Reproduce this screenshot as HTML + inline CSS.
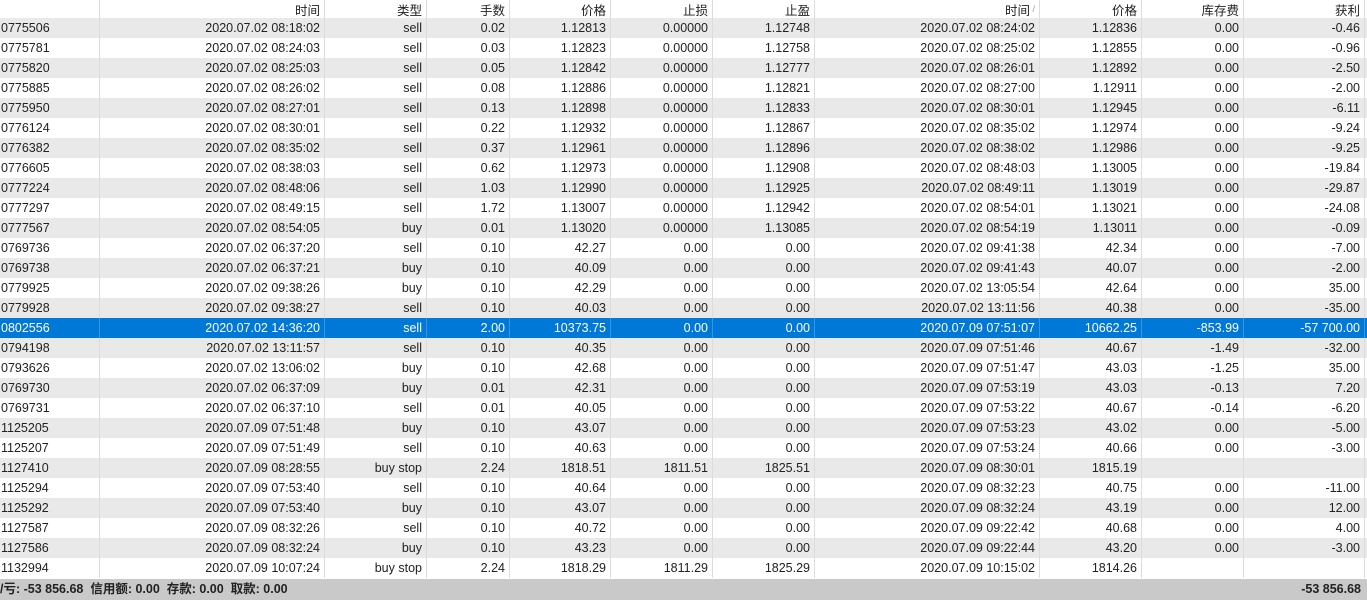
<!DOCTYPE html>
<html><head><meta charset="utf-8"><style>
*{margin:0;padding:0;box-sizing:border-box}
body{width:1367px;height:600px;overflow:hidden;background:#fff;font-family:"Liberation Sans","Noto Sans CJK SC",sans-serif;font-size:12.5px;color:#222}
.r{position:absolute;left:0;width:1367px;display:flex;height:20px}
.r div{height:100%;text-align:right;padding-right:4px;border-right:1px solid #dcdcdc;white-space:nowrap;overflow:hidden;display:flex;align-items:center;justify-content:flex-end}
.r div:first-child{justify-content:flex-start;padding-left:1px}
.g{background:#e9e9e9}
.s{background:#0078d7;color:#fff}
.s div{border-right-color:#3a95e0}
.h{background:#fff;height:18px}
.c0{width:100px}.c1{width:225px}.c2{width:102px}.c3{width:83px}.c4{width:101px}.c5{width:102px}.c6{width:102px}.c7{width:225px}.c8{width:102px}.c9{width:102px}.c10{width:121px}
.f{position:absolute;left:0;top:579px;width:1367px;height:21px;background:#c9c9c9;font-weight:bold;line-height:21px;font-size:12.5px}
</style></head><body>
<div class="r h" style="top:0"><div class="c0"></div><div class="c1">时间</div><div class="c2">类型</div><div class="c3">手数</div><div class="c4">价格</div><div class="c5">止损</div><div class="c6">止盈</div><div class="c7">时间 <span style="color:#999;font-size:9px">&nbsp;/</span></div><div class="c8">价格</div><div class="c9">库存费</div><div class="c10">获利</div></div>
<div id="t"></div>
<div class="f"><span style="position:absolute;left:0">/亏: -53 856.68&nbsp; 信用额: 0.00&nbsp; 存款: 0.00&nbsp; 取款: 0.00</span><span style="position:absolute;right:6px">-53 856.68</span></div>
<script>
var d=[
["0775506","2020.07.02 08:18:02","sell","0.02","1.12813","0.00000","1.12748","2020.07.02 08:24:02","1.12836","0.00","-0.46"],
["0775781","2020.07.02 08:24:03","sell","0.03","1.12823","0.00000","1.12758","2020.07.02 08:25:02","1.12855","0.00","-0.96"],
["0775820","2020.07.02 08:25:03","sell","0.05","1.12842","0.00000","1.12777","2020.07.02 08:26:01","1.12892","0.00","-2.50"],
["0775885","2020.07.02 08:26:02","sell","0.08","1.12886","0.00000","1.12821","2020.07.02 08:27:00","1.12911","0.00","-2.00"],
["0775950","2020.07.02 08:27:01","sell","0.13","1.12898","0.00000","1.12833","2020.07.02 08:30:01","1.12945","0.00","-6.11"],
["0776124","2020.07.02 08:30:01","sell","0.22","1.12932","0.00000","1.12867","2020.07.02 08:35:02","1.12974","0.00","-9.24"],
["0776382","2020.07.02 08:35:02","sell","0.37","1.12961","0.00000","1.12896","2020.07.02 08:38:02","1.12986","0.00","-9.25"],
["0776605","2020.07.02 08:38:03","sell","0.62","1.12973","0.00000","1.12908","2020.07.02 08:48:03","1.13005","0.00","-19.84"],
["0777224","2020.07.02 08:48:06","sell","1.03","1.12990","0.00000","1.12925","2020.07.02 08:49:11","1.13019","0.00","-29.87"],
["0777297","2020.07.02 08:49:15","sell","1.72","1.13007","0.00000","1.12942","2020.07.02 08:54:01","1.13021","0.00","-24.08"],
["0777567","2020.07.02 08:54:05","buy","0.01","1.13020","0.00000","1.13085","2020.07.02 08:54:19","1.13011","0.00","-0.09"],
["0769736","2020.07.02 06:37:20","sell","0.10","42.27","0.00","0.00","2020.07.02 09:41:38","42.34","0.00","-7.00"],
["0769738","2020.07.02 06:37:21","buy","0.10","40.09","0.00","0.00","2020.07.02 09:41:43","40.07","0.00","-2.00"],
["0779925","2020.07.02 09:38:26","buy","0.10","42.29","0.00","0.00","2020.07.02 13:05:54","42.64","0.00","35.00"],
["0779928","2020.07.02 09:38:27","sell","0.10","40.03","0.00","0.00","2020.07.02 13:11:56","40.38","0.00","-35.00"],
["0802556","2020.07.02 14:36:20","sell","2.00","10373.75","0.00","0.00","2020.07.09 07:51:07","10662.25","-853.99","-57 700.00"],
["0794198","2020.07.02 13:11:57","sell","0.10","40.35","0.00","0.00","2020.07.09 07:51:46","40.67","-1.49","-32.00"],
["0793626","2020.07.02 13:06:02","buy","0.10","42.68","0.00","0.00","2020.07.09 07:51:47","43.03","-1.25","35.00"],
["0769730","2020.07.02 06:37:09","buy","0.01","42.31","0.00","0.00","2020.07.09 07:53:19","43.03","-0.13","7.20"],
["0769731","2020.07.02 06:37:10","sell","0.01","40.05","0.00","0.00","2020.07.09 07:53:22","40.67","-0.14","-6.20"],
["1125205","2020.07.09 07:51:48","buy","0.10","43.07","0.00","0.00","2020.07.09 07:53:23","43.02","0.00","-5.00"],
["1125207","2020.07.09 07:51:49","sell","0.10","40.63","0.00","0.00","2020.07.09 07:53:24","40.66","0.00","-3.00"],
["1127410","2020.07.09 08:28:55","buy stop","2.24","1818.51","1811.51","1825.51","2020.07.09 08:30:01","1815.19","",""],
["1125294","2020.07.09 07:53:40","sell","0.10","40.64","0.00","0.00","2020.07.09 08:32:23","40.75","0.00","-11.00"],
["1125292","2020.07.09 07:53:40","buy","0.10","43.07","0.00","0.00","2020.07.09 08:32:24","43.19","0.00","12.00"],
["1127587","2020.07.09 08:32:26","sell","0.10","40.72","0.00","0.00","2020.07.09 09:22:42","40.68","0.00","4.00"],
["1127586","2020.07.09 08:32:24","buy","0.10","43.23","0.00","0.00","2020.07.09 09:22:44","43.20","0.00","-3.00"],
["1132994","2020.07.09 10:07:24","buy stop","2.24","1818.29","1811.29","1825.29","2020.07.09 10:15:02","1814.26","",""]];
var h="";
d.forEach(function(r,i){var cls=i==15?"s":(i%2==0?"g":"");
h+='<div class="r '+cls+'" style="top:'+(18+i*20)+'px">';r.forEach(function(v,j){h+='<div class="c'+j+'">'+v+'</div>'});h+='</div>'});
document.getElementById("t").innerHTML=h;
</script>
</body></html>
